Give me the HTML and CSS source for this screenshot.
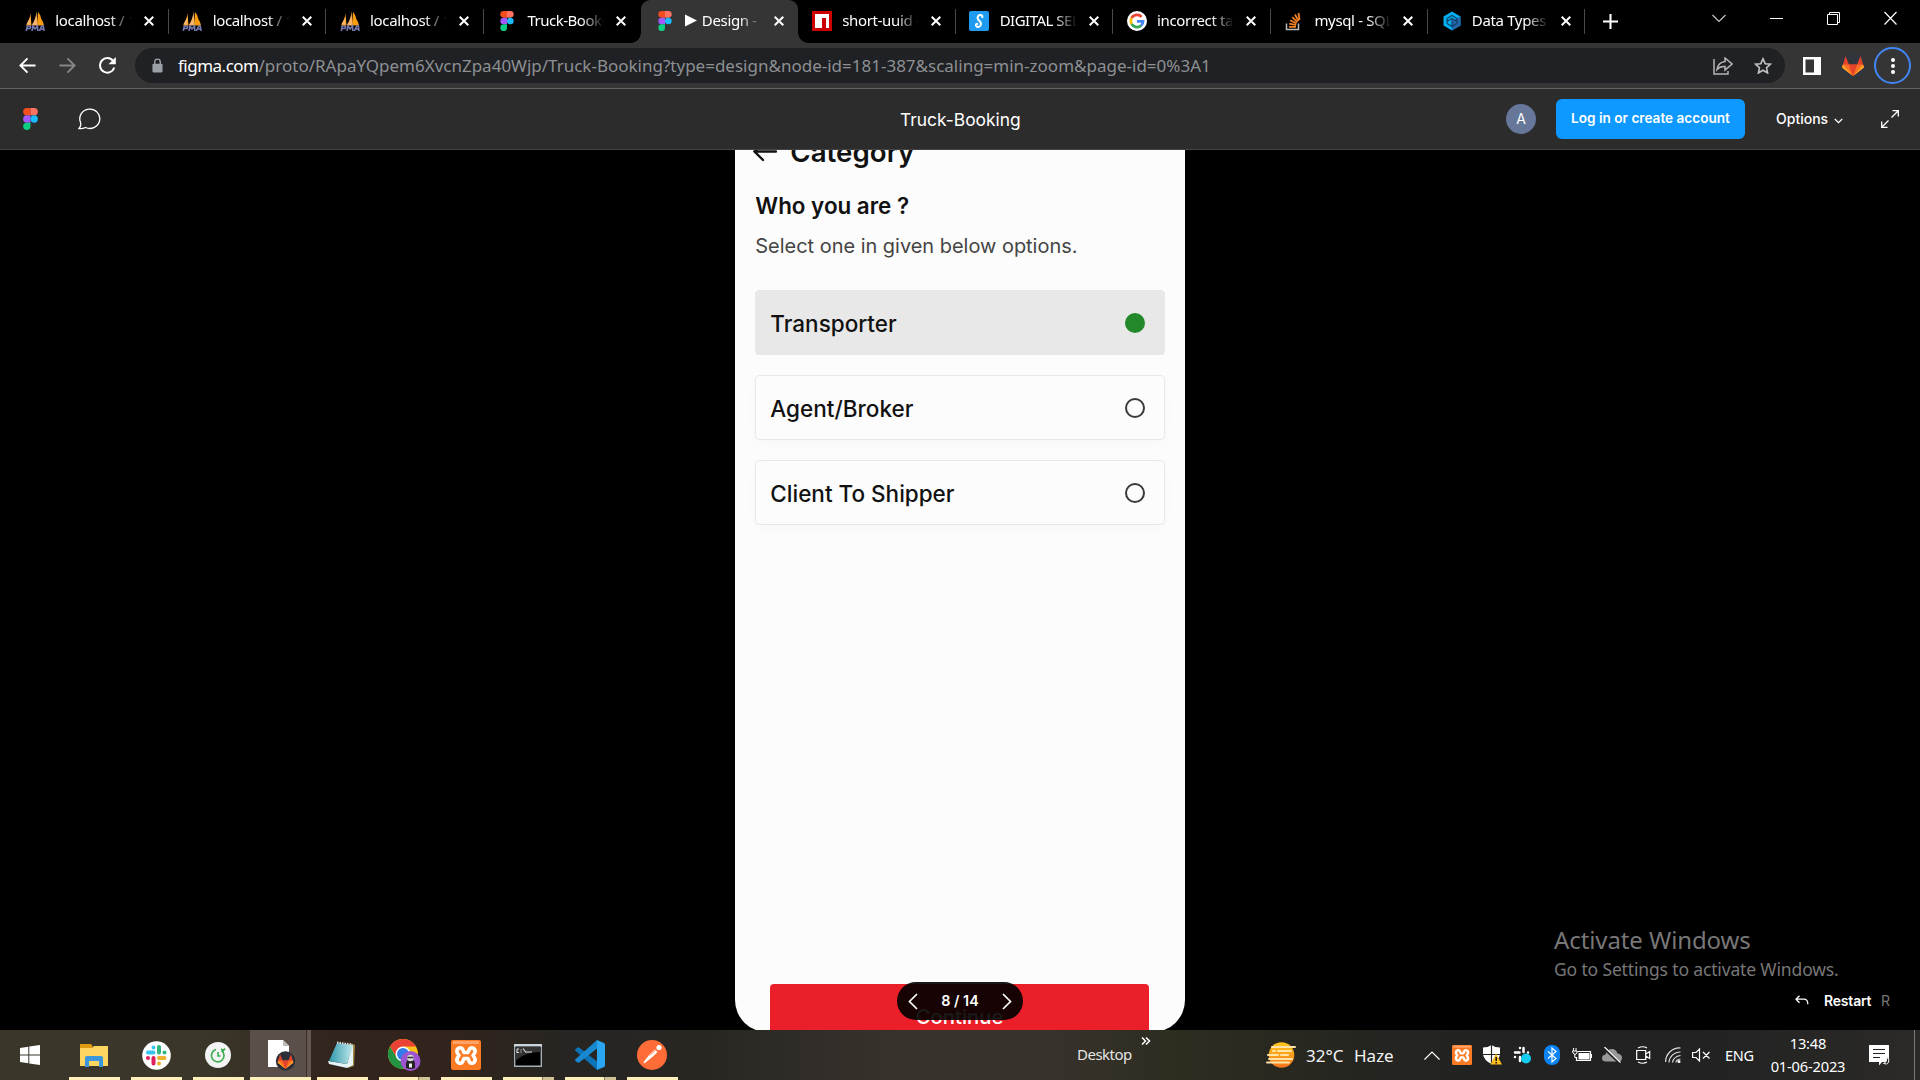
FILE: index.html
```html
<!DOCTYPE html>
<html lang="en">
<head>
<meta charset="utf-8">
<title>Truck-Booking</title>
<link rel="stylesheet" href="styles.css">
</head>
<body>
<svg class="defs" width="0" height="0" aria-hidden="true">
  <symbol id="figma" viewBox="0 0 14 21">
    <path fill="#f24e1e" d="M3.5 0H7v7H3.5a3.5 3.5 0 0 1 0-7z"/><path fill="#ff7262" d="M7 0h3.5a3.5 3.5 0 0 1 0 7H7z"/>
    <path fill="#a259ff" d="M3.5 7H7v7H3.5a3.5 3.5 0 0 1 0-7z"/><circle fill="#1abcfe" cx="10.5" cy="10.5" r="3.5"/>
    <path fill="#0acf83" d="M3.5 14H7v3.5A3.5 3.5 0 1 1 3.5 14z"/>
  </symbol>
  <symbol id="pma" viewBox="0 0 20 20">
    <path fill="#f89c0e" d="M1 14.500Q5 8 5.500 2L6.500 14.500zM13 1Q16 4 16.300 8 18 10 19 14.500H12z"/><path fill="#f9b468" d="M6.500 14.500Q11 8 11.500 0L12.500 14.500zM1.500 13l4-7v8z"/>
    <path fill="none" stroke="#777bb3" stroke-width="1.600" d="M1.300 20l1-5h2.200q1.800.500.500 2.500H2M7 20l1-5 2 3 2.500-3 .300 5M14.300 20l2.500-5h1.500l.700 5M15.500 18h3"/>
  </symbol>
  <symbol id="close" viewBox="0 0 10 10"><path d="M.7.7l8.600 8.600M9.300.7L.7 9.300" stroke="#fff" stroke-width="2"/></symbol>
  <symbol id="xampp" viewBox="0 0 30 30">
    <rect width="30" height="30" rx="2" fill="#fb7a24"/><path d="M2 1h26v3H2z" fill="#ffa368"/>
    <path d="M11.500 9Q10 7.300 7.800 8.200 5 9.700 6.300 13L8 15.500 6.300 18Q5 21.500 7.800 23 11 24 12 21L13 18.500H17L18 21Q19 24 22.200 23 25 21.500 23.700 18L22 15.500 23.700 13Q25 9.700 22.200 8.200 20 7.300 18.500 9L17 12.500H13z" fill="none" stroke="#fff" stroke-width="3.600" stroke-linejoin="round"/>
  </symbol>
  <symbol id="gitlab" viewBox="0 0 22 20">
    <path fill="#e24329" d="M11 20L0 11.500 3.500 0l3.500 8.500h8L18.500 0 22 11.500z"/><path fill="#fc6d26" d="M11 20L0 11.500l1-3h6zM11 20l11-8.500-1-3h-6z"/><path fill="#fca326" d="M11 20L0 11.500l1-3zM11 20l11-8.500-1-3z"/><path fill="#e24329" d="M11 20L7 8.500h8z"/>
  </symbol>
</svg>

<header class="tabstrip">
  <div class="tab"><svg class="fav"><use href="#pma"/></svg><span class="label">localhost / 127</span><svg class="x"><use href="#close"/></svg></div>
  <div class="tab"><svg class="fav"><use href="#pma"/></svg><span class="label">localhost / 127</span><svg class="x"><use href="#close"/></svg></div>
  <div class="tab"><svg class="fav"><use href="#pma"/></svg><span class="label">localhost / 127</span><svg class="x"><use href="#close"/></svg></div>
  <div class="tab last"><svg class="fav"><use href="#figma"/></svg><span class="label tight">Truck-Booking</span><svg class="x"><use href="#close"/></svg></div>
  <div class="tab active"><svg class="fav"><use href="#figma"/></svg><span class="label"><svg class="play" viewBox="0 0 12 12"><path fill="#fff" d="M0 0l12 6-12 6z"/></svg>Design - Truck</span><svg class="x"><use href="#close"/></svg></div>
  <div class="tab"><svg class="fav" viewBox="0 0 20 20"><path fill="#c00" d="M0 0h20v20H0z"/><path fill="#fff" d="M3 3h14v14h-3V7h-4v10H3z"/></svg><span class="label">short-uuid - npm</span><svg class="x"><use href="#close"/></svg></div>
  <div class="tab"><svg class="fav" viewBox="0 0 20 20"><rect width="20" height="20" rx="2" fill="#1e9bf0"/><path d="M13.200 7Q14 4 11.500 4T8.500 6.800Q8.600 8.500 10.500 10T11.800 14Q11 16.200 8.800 16T7 13.500L9 12.500" fill="none" stroke="#fff" stroke-width="2"/></svg><span class="label tight">DIGITAL SELL</span><svg class="x"><use href="#close"/></svg></div>
  <div class="tab"><svg class="fav" viewBox="0 0 20 20"><circle cx="10" cy="10" r="10" fill="#fff"/><g fill="none" stroke-width="2.700"><path stroke="#ea4335" d="M4.600 7A6.200 6.200 0 0 1 14.600 5.800"/><path stroke="#fbbc05" d="M4.600 7a6.200 6.200 0 0 0 0 6"/><path stroke="#34a853" d="M4.600 13a6.200 6.200 0 0 0 9.600 1.500"/><path stroke="#4285f4" d="M14.200 14.500a6.200 6.200 0 0 0 1.900-4.200H10"/></g></svg><span class="label">incorrect table</span><svg class="x"><use href="#close"/></svg></div>
  <div class="tab"><svg class="fav" viewBox="0 0 20 20"><path fill="none" stroke="#bcbbbb" stroke-width="1.500" d="M2.500 12.500v6h12v-6"/><path fill="none" stroke="#f48024" stroke-width="1.800" d="M5 15.800h7M5.200 12.700l7 1.400M6.200 9.300l6.300 3.200M8.300 6.200l5 5M11 3.500l3.500 6.500M14.500 2l1 7"/></svg><span class="label">mysql - SQL e</span><svg class="x"><use href="#close"/></svg></div>
  <div class="tab"><svg class="fav" viewBox="0 0 20 20"><path fill="#03afef" d="M10 .5l8.500 5v9l-8.500 5-8.500-5v-9z"/><path fill="#2464a8" d="M10 19.500l8.500-5v-9L10 10z"/><path fill="none" stroke="#133f66" stroke-width="1.100" d="M5 7.500l5-3 5 3v5l-5 3-5-3zM5 10.500l5-3 5 3M10 8v8"/></svg><span class="label">Data Types | S</span><svg class="x"><use href="#close"/></svg></div>
  <svg class="plus" viewBox="0 0 16 16"><path d="M8 0v16M0 8h16" stroke="#fff" stroke-width="2.200"/></svg>
  <div class="winctl">
    <svg width="14" height="20" viewBox="0 0 14 20"><path d="M.5 6L7 12.500 13.500 6" fill="none" stroke="#ccc" stroke-width="1.100"/></svg>
    <svg width="13" height="20" viewBox="0 0 13 20"><path d="M0 9.500h13" stroke="#fff"/></svg>
    <svg width="13" height="20" viewBox="0 0 13 20"><path d="M.5 5.500h10v10H.5zM2.500 5.500v-2h10v10h-2" fill="none" stroke="#fff"/></svg>
    <svg width="13" height="20" viewBox="0 0 13 20"><path d="M.5 3l12 12.500M12.500 3L.5 15.500" stroke="#fff" stroke-width="1.200"/></svg>
  </div>
</header>

<nav class="toolbar">
  <svg class="back" viewBox="0 0 18 18"><path d="M17.500 9H2M9 1.500L1.500 9 9 16.500" fill="none" stroke="#fff" stroke-width="2"/></svg>
  <svg class="fwd" viewBox="0 0 18 18"><path d="M.5 9H16M9 1.500L16.500 9 9 16.500" fill="none" stroke="#868686" stroke-width="2"/></svg>
  <svg class="reload" viewBox="0 0 18 18"><path d="M15.200 4A7.300 7.300 0 1 0 16.300 10.500" fill="none" stroke="#fff" stroke-width="2"/><path d="M17.800 0v7.300h-7.300z" fill="#fff"/></svg>
  <div class="omnibox">
    <svg class="lock" viewBox="0 0 12 15"><rect y="5.500" x=".5" width="11" height="9.500" rx="1.200" fill="#9aa0a6"/><path d="M3 6V3.500a3 3 0 0 1 6 0V6" fill="none" stroke="#9aa0a6" stroke-width="1.500"/></svg>
    <span class="url"><b>figma.com</b>/proto/RApaYQpem6XvcnZpa40Wjp/Truck-Booking?type=design&amp;node-id=181-387&amp;scaling=min-zoom&amp;page-id=0%3A1</span>
    <svg class="share" viewBox="0 0 20 18"><path d="M1 2v15h14v-3M4 12.500q1-7 8-8V1l7 6-7 6V9.500q-5-.5-8 3z" fill="none" stroke="#b4b4b4" stroke-width="1.500"/></svg>
    <svg class="star" viewBox="0 0 18 17"><path d="M9 1.800l2.200 4.900 5.200.5-3.900 3.600 1.100 5.200L9 13.300 4.400 16l1.100-5.200L1.600 7.200l5.200-.5z" fill="none" stroke="#c2c2c2" stroke-width="1.600"/></svg>
  </div>
  <svg class="panel" viewBox="0 0 18 18"><path d="M1.250 1.250h15.500v15.500H1.250z" fill="none" stroke="#fff" stroke-width="2.500"/><path d="M11 1h6v16h-6z" fill="#fff"/></svg>
  <svg class="ext" viewBox="0 0 26 26"><circle cx="13" cy="13" r="13" fill="#30353e"/><use href="#gitlab" x="2" y="3" width="22" height="20"/></svg>
  <div class="more"><i></i><i></i><i></i></div>
</nav>

<div class="figbar">
  <svg class="logo"><use href="#figma"/></svg>
  <svg class="comment" viewBox="0 0 24 22"><path d="M2.500 14.300A10 9.700 0 1 1 7.500 19.500Q4 21 1 20.500q2.500-2.500 1.500-6.200z" fill="none" stroke="#fff" stroke-width="1.300"/></svg>
  <h1>Truck-Booking</h1>
  <span class="avatar">A</span>
  <button class="login">Log in or create account</button>
  <span class="options">Options</span>
  <svg class="caret" viewBox="0 0 9 6"><path d="M.8 1l3.700 3.700L8.200 1" fill="none" stroke="#fff" stroke-width="1.300"/></svg>
  <svg class="expand" viewBox="0 0 18 18"><path d="M10.500 7.500L17 1M11.500.7h5.800v5.800M7.500 10.500L1 17M.7 11.500v5.800h5.800" fill="none" stroke="#fff" stroke-width="1.300"/></svg>
</div>

<main class="stage">
  <section class="phone">
    <div class="phead">
      <svg class="parrow" viewBox="0 0 24 20"><path d="M23 9.500H2M10 1L1.500 9.500 10 18" fill="none" stroke="#111" stroke-width="2.400" stroke-linecap="round"/></svg>
      <h2>Category</h2>
    </div>
    <h3>Who you are ?</h3>
    <p>Select one in given below options.</p>
    <div class="choices">
      <div class="choice on"><span>Transporter</span><i></i></div>
      <div class="choice"><span>Agent/Broker</span><i></i></div>
      <div class="choice"><span>Client To Shipper</span><i></i></div>
    </div>
    <div class="cta"><span>Continue</span></div>
  </section>
  <div class="pager">
    <svg viewBox="0 0 10 17"><path d="M9 1L1.500 8.500 9 16" fill="none" stroke="#fff" stroke-width="1.700"/></svg>
    <span>8 / 14</span>
    <svg viewBox="0 0 10 17"><path d="M1 1l7.500 7.500L1 16" fill="none" stroke="#fff" stroke-width="1.700"/></svg>
  </div>
  <div class="activate"><div class="a1">Activate Windows</div><div class="a2">Go to Settings to activate Windows.</div></div>
  <div class="restart"><svg viewBox="0 0 14 10"><path d="M4.500.7L1 4.200l3.500 3.500M1 4.200h8q3.800 0 3.800 5" fill="none" stroke="#fff" stroke-width="1.300"/></svg><b>Restart</b><span>R</span></div>
</main>

<footer class="taskbar">
  <div class="slot start"><svg width="20" height="20" viewBox="0 0 20 20"><path fill="#fff" d="M0 3l8.300-1.200v7.700H0zM9.300 1.600L20 0v9.500H9.300zM0 10.500h8.300v7.700L0 17zM9.300 10.500H20V20L9.300 18.400z"/></svg></div>
  <div class="slot run"><svg width="28" height="24" viewBox="0 0 28 24"><path fill="#e09c10" d="M0 1h11l2 3-2 2H0z"/><path fill="#ffd561" d="M0 5h12l2-2h14v20H0z"/><path fill="#3c96dc" d="M5 24V15q0-2 2-2h14q2 0 2 2v9h-4v-6H9v6z"/></svg></div>
  <div class="slot run"><svg width="29" height="29" viewBox="0 0 29 29"><circle cx="14.500" cy="14.500" r="14.300" fill="#fff"/><g fill="none" stroke-width="4" stroke-linecap="round"><path stroke="#36c5f0" d="M11.500 6.500v0M6 11.500h5.500"/><path stroke="#2eb67d" d="M17 6v5.500M22.500 11.500v0"/><path stroke="#ecb22e" d="M17 17h5.500M17 22.500v0"/><path stroke="#e01e5a" d="M11.500 17v5.500M6 17v0"/></g></svg></div>
  <div class="slot run"><svg width="26" height="26" viewBox="0 0 26 26"><circle cx="13" cy="13" r="13" fill="#f3f5f4"/><path d="M16.500 8.500A6.300 6.300 0 1 1 11 7.500M13 10v4h2.500M16 7l2.500 1.500L20 6.500" fill="none" stroke="#3fab50" stroke-width="1.600"/></svg></div>
  <div class="slot run focus"><svg width="30" height="32" viewBox="0 0 30 32"><path fill="#fff" d="M3 1h15l6 6v21H3z"/><path fill="#bbb" d="M18 1v6h6z"/><circle cx="20.500" cy="22" r="9.700" fill="#2b2f3a"/><use href="#gitlab" x="12.500" y="15" width="16" height="15"/></svg></div>
  <div class="slot run note"><svg width="30" height="28" viewBox="0 0 30 28"><defs><linearGradient id="np"><stop stop-color="#2d97a9"/><stop offset="1" stop-color="#c2e9ee"/></linearGradient></defs><path fill="#a08745" d="M23 2l5 2-1 21-6 2z"/><path fill="#e5f5f7" d="M1 20l19 3 6-20v21l-6 3-18-4z"/><path fill="url(#np)" d="M10 2l16 2-6 19-18-3z"/><path d="M10 1.500l15 2" stroke="#ddd" stroke-width="2" stroke-dasharray="1.500 1"/></svg></div>
  <div class="slot run multi"><svg width="34" height="34" viewBox="0 0 34 34"><circle cx="16" cy="16" r="15" fill="#fbc116"/><path fill="#ea4335" d="M3 8.500a15 15 0 0 1 26 0H16l-6.500 11z"/><path fill="#229342" d="M3 8.500A15 15 0 0 0 16 31l6-11H10z"/><circle cx="16" cy="16" r="7.500" fill="#fff"/><circle cx="16" cy="16" r="6" fill="#317bea"/><circle cx="23.500" cy="23" r="10" fill="#9c55cf"/><path fill="#222" d="M19 30v-5l2-4h5l2 4v5q-4 2-9 0z"/><circle cx="23.500" cy="20" r="3.300" fill="#d8d8d8"/><path d="M20.500 19.500h6" stroke="#333" stroke-width="1.500"/><path fill="#eee" d="M22 25.500h3v4h-3z"/></svg></div>
  <div class="slot run"><svg width="30" height="30"><use href="#xampp"/></svg></div>
  <div class="slot run multi"><svg width="28" height="23" viewBox="0 0 28 23"><path fill="#000" stroke="#a4b0b8" stroke-width="1.400" d="M.7.700h26.600v21.600H.7z"/><path fill="#c9d4dc" d="M0 0h28v2.500H0z"/><path fill="#333" d="M1.400 3h25.200v5q-16 0-25.200 9z"/><path d="M3 5h2M3 5v3.500h2M7 5.500v1M7 7.500v1M9 4.500l3 4M12 8h6" stroke="#ddd" stroke-width="1.100" fill="none"/></svg></div>
  <div class="slot run multi"><svg width="30" height="30" viewBox="0 0 30 30"><path fill="#0d73b8" d="M0 9.500l2.500-2q1-.6 2 .2L22 21.500V30L.5 10.800q-.8-.7-.5-1.300z"/><path fill="#1889d0" d="M0 20.500l2.500 2q1 .6 2-.2L22 8.500V0L.5 19.200q-.8.700-.5 1.300z"/><path fill="#2aa5f2" d="M22 0l7 3q1 .5 1 1.500v21q0 1-1 1.500l-7 3z"/></svg></div>
  <div class="slot run"><svg width="30" height="30" viewBox="0 0 30 30"><circle cx="15" cy="15" r="15" fill="#ff6c37"/><circle cx="22" cy="7.500" r="2.600" fill="#fff"/><path fill="#fff" d="M18 9.500l2.500 2.500-4.500 4.500L8 23l-1.500.5.500-2 5.500-7z"/><path d="M12.500 15.500l6-5" stroke="#ff6c37" stroke-width=".7"/></svg></div>

  <span class="desk">Desktop</span><svg class="dbl" viewBox="0 0 10 8"><path d="M1 .5L4.500 4 1 7.500M5 .5L8.500 4 5 7.500" fill="none" stroke="#fff" stroke-width="1.500"/></svg>

  <div class="weather"><svg width="31" height="26" viewBox="0 0 31 26"><defs><linearGradient id="sun" x2="0" y2="1"><stop stop-color="#ffc81b"/><stop offset="1" stop-color="#f4731e"/></linearGradient></defs><circle cx="15.500" cy="13" r="12.800" fill="url(#sun)"/><path d="M6 5h23M12 9h13M2 13h10M15 13h7M3 17h23M1 20.500h22M7 9h2" stroke="#ffe3a8" stroke-width="2" stroke-linecap="round"/></svg><span class="temp">32°C</span><span class="haze">Haze</span></div>
  <div class="tray">
    <svg class="chev" viewBox="0 0 16 9"><path d="M.5 8.500L8 1l7.500 7.500" fill="none" stroke="#fff" stroke-width="1.200"/></svg>
    <svg class="i20"><use href="#xampp"/></svg>
    <svg class="i20" viewBox="0 0 20 20"><path fill="#fff" d="M9.500 0Q6 2.500 1 2.500v7q1 6 8.500 9.500Q17 15.500 18 9.500v-7Q13 2.500 9.500 0z"/><path d="M9.500 0v19M1 9.500h17" stroke="#222" stroke-width="1.200"/><path fill="#fcbf1c" d="M14 8.500l6 11H8.500z"/><path d="M14.200 12v4M14.200 17v1.500" stroke="#111" stroke-width="1.500"/></svg>
    <svg class="i20" viewBox="0 0 20 20"><g fill="none" stroke="#fff" stroke-width="2.500" stroke-linecap="round"><path d="M8 3v0M3 7.500h4.500M11.500 3v4M16 7.500v0M8 12v4M3 12v0M12 12h4"/></g><circle cx="14" cy="13.500" r="5" fill="#13ccf0"/></svg>
    <svg class="bt" viewBox="0 0 16 20"><rect width="16" height="20" rx="7.500" fill="#0a84f5"/><path d="M4 6.500l8 7-4 3.500V3l4 3.500-8 7" fill="none" stroke="#fff" stroke-width="1.200"/></svg>
    <svg class="bat" viewBox="0 0 20 14"><path d="M5.500 3.500h13v9h-14V9M19.500 6v4" fill="none" stroke="#fff" stroke-width="1.200"/><path fill="#fff" d="M6.500 5h11v6.500h-11z"/><path d="M1.500 0v3M4 0v3M.5 3h4.500v2l-2 1.500-2-1.500zM2.800 6v3.500H5" fill="none" stroke="#fff"/></svg>
    <svg class="cloud" viewBox="0 0 20 17"><path fill="#999" d="M4 14.500q-4 0-4-3.500 0-3 3.500-3.500Q5 2 10 2q4 0 5.500 4.500Q20 7 20 11q0 3.500-4 3.500z"/><path d="M2 1l16 15" stroke="#222" stroke-width="3"/><path d="M2.500 0l16 15.500" stroke="#fff" stroke-width="1.200"/></svg>
    <svg class="cam" viewBox="0 0 15 18"><path d="M.7 4.500h9v9h-9zM9.700 8l4-2.500v7l-4-2.500M2 2Q7 -.5 11 2M2 16q5 2.500 9 0" fill="none" stroke="#fff" stroke-width="1.200"/></svg>
    <svg class="wifi" viewBox="0 0 16 16"><g fill="none" stroke="#ddd" stroke-width="1.200"><path d="M.6 15A14 14 0 0 1 15.500 1M4 15.500A11 11 0 0 1 15.500 5M7.500 15.500q1-6 8-7M11 15.500q0-3 4.500-3.500"/></g><circle cx="14" cy="14.500" r="1.500" fill="#fff"/></svg>
    <svg class="spk" viewBox="0 0 19 14"><path d="M.6 4.500H4L7.500 1v12L4 9.500H.6zM11 4l6.500 6.500M17.500 4L11 10.500" fill="none" stroke="#fff" stroke-width="1.200"/></svg>
    <span class="eng">ENG</span>
    <div class="clock"><span class="time">13:48</span><span class="date">01-06-2023</span></div>
    <svg class="act" viewBox="0 0 21 21"><path fill="#fff" d="M0 0h20v17h-7l-3 3.500V17H0z"/><path d="M4 4.500h12M4 8.500h12M4 12.500h7" stroke="#222" stroke-width="1.200"/><path d="M14.500 18.500q4-1.500 3-6.500 3.500 2 2 5.500-1.500 2.500-5 1z" fill="#222" stroke="#fff" stroke-width="1"/></svg>
  </div>
  <i class="peek"></i>
</footer>
</body>
</html>
```
FILE: styles.css
```css
* { box-sizing: border-box; }
body { margin: 0; width: 1920px; height: 1080px; overflow: hidden; background: #000; color: #fff; font-family: "Noto Sans", sans-serif; display: flex; flex-direction: column; }
svg { display: block; flex: none; }
.defs { position: absolute; }
h1, h2, h3, p { margin: 0; }
span, b { white-space: nowrap; }

.tabstrip { display: flex; height: 43px; flex: none; padding-left: 11.500px; background: #000; }
.tab { width: 157.400px; height: 43px; padding: 0 0 1px 13.500px; display: flex; align-items: center; flex: none; position: relative; font-size: 15px; letter-spacing: -.35px; }
.tab::after { content: ""; position: absolute; right: 0; top: 9px; width: 1px; height: 25px; background: #4a4a4a; }
.tab.last::after, .tab.active::after { display: none; }
.fav { width: 20px; height: 20px; }
.label { width: 78px; margin-left: 10.300px; overflow: hidden; line-height: 22px; display: flex; align-items: center; position: relative; top: -1px; -webkit-mask-image: linear-gradient(90deg, #000 54px, transparent 77px); mask-image: linear-gradient(90deg, #000 54px, transparent 77px); }
.tight { letter-spacing: -.5px; }
.x { width: 10px; height: 10px; margin-left: 11px; }
.play { width: 12px; height: 13px; margin-right: 5px; }
.active { background: #353535; border-radius: 9px 9px 0 0; }
.active::before { content: ""; position: absolute; bottom: 0; left: -10px; width: 177.400px; height: 10px; z-index: 1; background: radial-gradient(circle at 0 0, transparent 9.5px, #353535 10px) left / 10px 10px no-repeat, radial-gradient(circle at 100% 0, transparent 9.5px, #353535 10px) right / 10px 10px no-repeat; }
.plus { width: 15px; height: 15px; margin: 14px 0 0 18px; }
.winctl { display: flex; margin-left: auto; padding: 9px 23px 0 0; gap: 44px; }

.toolbar { display: flex; align-items: center; height: 46px; flex: none; background: #353535; border-bottom: 1px solid #626262; padding-left: 19px; }
.back, .fwd, .reload { width: 17px; height: 17px; }
.fwd { margin-left: 23px; }
.reload { width: 18px; height: 18px; margin-left: 22px; }
.omnibox { width: 1650px; height: 35px; margin-left: 19px; border-radius: 18px; background: #202124; display: flex; align-items: center; padding: 0 13px 0 17px; }
.lock { width: 11px; height: 15px; }
.url { margin: 0 auto 0 15px; font-size: 17px; letter-spacing: 0; color: #8d9093; }
.url b { font-weight: 400; color: #fff; letter-spacing: -.5px; }
.share { width: 20px; height: 18px; }
.star { width: 18px; height: 17px; margin-left: 21px; }
.panel { width: 18px; height: 18px; margin-left: 18px; }
.ext { width: 26px; height: 26px; margin-left: 19px; }
.more { width: 37px; height: 37px; margin-left: 8px; border: 2px solid #4285f4; border-radius: 50%; display: flex; flex-direction: column; align-items: center; justify-content: center; gap: 2px; }
.more i { width: 4px; height: 4px; border-radius: 50%; background: #fff; }

.figbar { display: flex; align-items: center; height: 61px; flex: none; background: #2c2c2c; border-bottom: 1px solid #444; padding-left: 23px; font-family: Inter, sans-serif; }
.logo { width: 15px; height: 22px; }
.comment { width: 24px; height: 22px; margin-left: 40px; }
.figbar h1 { width: 122px; margin-left: 798px; padding-top: 1px; font-size: 17.400px; font-weight: 400; white-space: nowrap; }
.avatar { width: 30px; height: 30px; border-radius: 50%; background: #667799; margin-left: 484px; text-align: center; font-size: 14px; line-height: 30px; }
.login { width: 189px; height: 40px; margin-left: 20px; padding: 0 0 2px; border: 0; border-radius: 6px; background: #0d99ff; color: #fff; font: 600 13.600px Inter, sans-serif; }
.options { width: 52px; margin-left: 31px; padding-bottom: 1px; font-size: 14px; font-weight: 500; }
.caret { width: 9px; height: 6px; margin: 3px 0 0 6px; }
.expand { width: 18px; height: 18px; margin-left: 38px; }

.stage { height: 880px; flex: none; position: relative; overflow: hidden; font-family: Inter, sans-serif; }
.phone { width: 450px; height: 882px; margin-left: 735.300px; padding: 0 20px; background: #fcfcfc; color: #111; border-radius: 0 0 32px 32px; display: flex; flex-direction: column; }
.phead { display: flex; align-items: center; height: 32px; margin-top: -14px; }
.parrow { width: 24px; height: 20px; margin-left: -2px; }
.phead h2 { margin-left: 13px; font-size: 27.700px; line-height: 32px; font-weight: 600; }
.phone h3 { font-size: 22.400px; line-height: 28px; font-weight: 600; margin-top: 24px; }
.phone p { font-size: 19.950px; line-height: 26px; margin-top: 13px; color: #444; }
.choices { display: flex; flex-direction: column; gap: 20px; margin-top: 31px; }
.choice { height: 65px; width: 410px; padding: 1px 19px 0 14px; display: flex; align-items: center; justify-content: space-between; border: 1px solid #e8e8e8; border-radius: 4px; font-size: 22.500px; font-weight: 500; box-shadow: 0 4px 14px rgba(0,0,0,.025); }
.choice.on { background: #e8e8e8; box-shadow: none; }
.choice span { padding-top: 1px; }
.choice i { width: 20px; height: 20px; margin-top: -1px; border: 2px solid #3a3a3a; border-radius: 50%; }
.choice.on i { background: #228829; border: 0; }
.cta { width: 379px; height: 60px; margin: auto 0 -12px 14.700px; background: #ea1f29; color: #fff; border-radius: 4px; text-align: center; font-size: 20.300px; line-height: 65px; font-weight: 500; }
.pager { position: absolute; left: 897px; top: 832px; width: 126px; height: 38px; border-radius: 19px; background: rgba(0,0,0,.9); display: flex; align-items: center; justify-content: space-between; padding: 0 11px; font-size: 14.300px; font-weight: 600; }
.pager span { padding-bottom: 2px; }
.pager svg { width: 10px; height: 17px; }
.activate { position: absolute; left: 1554px; top: 773px; font-family: "Noto Sans", sans-serif; color: #777; }
.a1 { font-size: 24px; line-height: 34px; letter-spacing: -.1px; }
.a2 { font-size: 17.500px; line-height: 25px; letter-spacing: -.15px; }
.restart { position: absolute; left: 1795px; top: 840px; display: flex; align-items: center; height: 20px; font-size: 14px; }
.restart svg { width: 14px; height: 10px; }
.restart b { font-weight: 600; margin-left: 15px; width: 57px; letter-spacing: -.2px; }
.restart span { color: #777; }

.taskbar { display: flex; height: 50px; flex: none; background: linear-gradient(90deg, #3a362a 0, #3a362a 210px, #32251d 320px, #32241c 440px, #262522 570px, #292622 700px, #37322c 900px, #37322c 1050px, #2e2d20 1170px, #242420 1380px, #222 1500px, #222 1700px, #2b2a28 1920px); }
.slot { width: 51px; height: 50px; margin-right: 11px; display: flex; align-items: center; justify-content: center; flex: none; position: relative; }
.slot svg { margin-left: -1px; }
.start { width: 50px; margin: 0 14px 0 5px; }
.run { border-bottom: 3px solid #ffefb8; padding-top: 3px; }
.focus { width: 61px; margin: 0 6px 0 -5px; background: linear-gradient(90deg, #5b5049 56px, #39302b 56px, #39302b 57px, #63574f 57px); }
.multi::after { content: ""; position: absolute; right: 0; bottom: -3px; width: 11px; height: 3px; background: #d0c496; border-left: 1px solid #847e62; }
.desk { margin-left: 388px; width: 55px; font-size: 15px; line-height: 49px; letter-spacing: -.5px; color: #e5e5e5; }
.dbl { width: 10px; height: 8px; margin: 7px 0 0 9px; }
.weather { display: flex; align-items: center; margin-left: 115px; font-size: 17px; color: #f2f2f2; }
.temp { margin-left: 9px; width: 48px; }
.haze { width: 70px; }
.tray { display: flex; align-items: center; }
.chev { width: 16px; height: 9px; margin-right: 12px; }
.i20 { width: 20px; height: 20px; margin-right: 10px; }
.bt { width: 16px; height: 20px; margin: 0 12px 0 2px; }
.bat { width: 20px; height: 14px; margin-right: 10px; }
.cloud { width: 20px; height: 17px; margin-right: 14px; }
.cam { width: 15px; height: 18px; margin-right: 14px; }
.wifi { width: 16px; height: 16px; margin-right: 11px; }
.spk { width: 19px; height: 14px; margin-right: 14px; }
.eng { width: 30px; font-size: 14.500px; letter-spacing: -.3px; }
.clock { width: 90px; margin-left: 8px; display: flex; flex-direction: column; align-items: center; font-size: 14.700px; line-height: 23px; letter-spacing: -.2px; }
.act { width: 21px; height: 21px; margin-left: 16px; }
.peek { width: 1px; height: 50px; margin-left: 24px; background: #777; }
```
